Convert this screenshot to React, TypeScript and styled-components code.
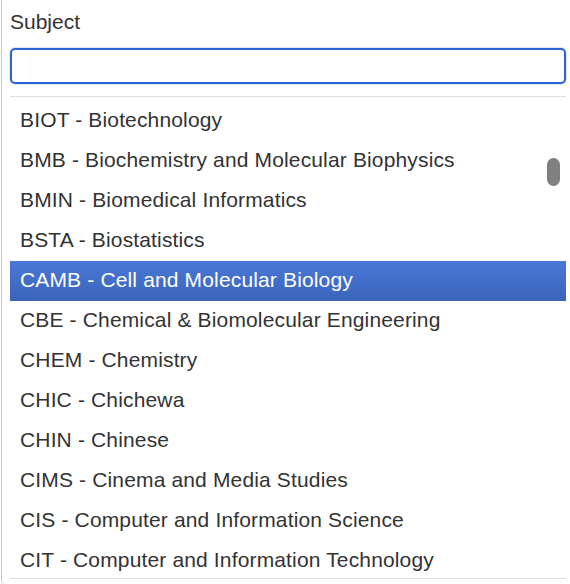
import React from "react";
import styled, { createGlobalStyle } from "styled-components";

const Global = createGlobalStyle`
  html, body { margin: 0; padding: 0; background: #fff; }
  body { font-family: "Liberation Sans", Arial, Helvetica, sans-serif; }
`;

const Panel = styled.div`
  margin-left: 1px;
  height: 584px;
  box-sizing: border-box;
  border-left: 1px solid #cbcbcb;
  border-bottom-left-radius: 4px;
  padding: 0 4px 0 8px;
  display: flex;
  flex-direction: column;
  overflow: hidden;
`;

const Label = styled.label`
  display: block;
  font-family: "Liberation Sans", Arial, sans-serif;
  font-size: 21px;
  line-height: 24px;
  color: #333;
  padding-top: 10px;
  height: 37px;
  box-sizing: border-box;
`;

const SearchInput = styled.input`
  display: block;
  width: 556px;
  height: 36px;
  box-sizing: border-box;
  border: 2px solid #2d62d2;
  border-radius: 5px;
  outline: none;
  margin: 11px 0 0;
  padding: 0 8px;
  font-size: 21px;
  font-family: "Liberation Sans", Arial, sans-serif;
  box-shadow: 0 0 0 1px rgba(45, 98, 210, 0.15);
`;

const ListBox = styled.div`
  position: relative;
  margin-top: 12px;
  width: 556px;
  height: 483px;
  box-sizing: border-box;
  border-top: 1px solid #dedede;
  border-bottom: 1px solid #dedede;
  padding-top: 4px;
  overflow: hidden;
`;

const Option = styled.div<{ $active?: boolean }>`
  height: 40px;
  box-sizing: border-box;
  display: flex;
  align-items: center;
  padding: 0 0 2px 10px;
  font-family: "Liberation Sans", Arial, sans-serif;
  font-size: 21px;
  letter-spacing: 0.15px;
  color: ${(p) => (p.$active ? "#fff" : "#333")};
  background: ${(p) =>
    p.$active ? "linear-gradient(#4a79d6, #3b63ba)" : "transparent"};
  white-space: nowrap;
`;

const Thumb = styled.div`
  position: absolute;
  left: 537px;
  top: 61px;
  width: 13px;
  height: 28px;
  border-radius: 7px;
  background: #808080;
`;

const items = [
  "BIOT - Biotechnology",
  "BMB - Biochemistry and Molecular Biophysics",
  "BMIN - Biomedical Informatics",
  "BSTA - Biostatistics",
  "CAMB - Cell and Molecular Biology",
  "CBE - Chemical & Biomolecular Engineering",
  "CHEM - Chemistry",
  "CHIC - Chichewa",
  "CHIN - Chinese",
  "CIMS - Cinema and Media Studies",
  "CIS - Computer and Information Science",
  "CIT - Computer and Information Technology",
];

export default function App() {
  return (
    <>
      <Global />
      <Panel>
        <Label htmlFor="subject">Subject</Label>
        <SearchInput id="subject" />
        <ListBox>
          {items.map((t, i) => (
            <Option key={t} $active={i === 4}>
              {t}
            </Option>
          ))}
          <Thumb />
        </ListBox>
      </Panel>
    </>
  );
}
